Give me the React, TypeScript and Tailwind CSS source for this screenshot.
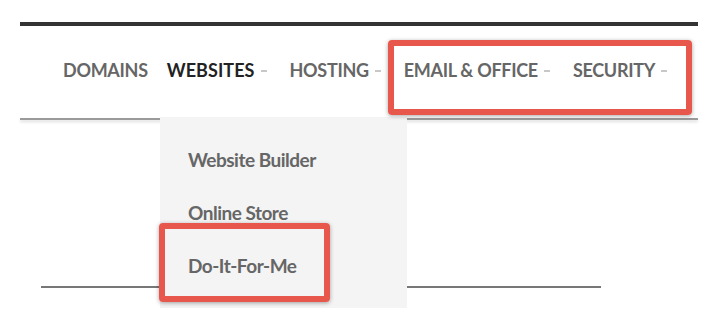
const navItems = [
  { label: 'DOMAINS', caret: false, active: false },
  { label: 'WEBSITES', caret: true, active: true },
  { label: 'HOSTING', caret: true, active: false },
  { label: 'EMAIL & OFFICE', caret: true, active: false },
  { label: 'SECURITY', caret: true, active: false },
]

const menuItems = ['Website Builder', 'Online Store', 'Do-It-For-Me']

function Caret() {
  return <span className="ml-[6px] mr-[4px] inline-block h-[2px] w-[6px] translate-y-[1px] bg-[#c8c8c8]" />
}

function Highlight({ className }: { className: string }) {
  return (
    <div
      className={`pointer-events-none absolute rounded-[4px] border-[6px] border-[#e8574c] shadow-[0_1px_4px_rgba(0,0,0,0.35)] ${className}`}
    />
  )
}

export default function App() {
  return (
    <div
      className="relative h-[331px] w-[720px] overflow-hidden bg-white"
      style={{ fontFamily: 'Lato, "Open Sans", sans-serif' }}
    >
      <div className="pt-[22px]">
        <div className="ml-[20px] mr-[22px] h-[4px] bg-[#333]" />
        <nav className="flex h-[92px] items-start gap-[19px] pl-[63px] pt-[35px]">
          {navItems.map((item) => (
            <div key={item.label} className="flex items-center">
              <span
                className={`text-[18px] font-bold leading-none ${
                  item.active ? 'tracking-[0.05px] text-[#222]' : 'tracking-[-0.3px] text-[#666]'
                }`}
              >
                {item.label}
              </span>
              {item.caret && <Caret />}
            </div>
          ))}
        </nav>
        <div className="ml-[20px] mr-[22px] h-[2px] bg-[#9a9a9a] shadow-[0_2px_3px_rgba(0,0,0,0.15)]" />
        <div className="ml-[41px] mt-[166px] h-[2px] w-[560px] bg-[#777]" />
      </div>

      <div className="absolute left-[160px] top-[117px] flex h-[191px] w-[247px] flex-col bg-[#f4f4f4] pl-[28px] pt-[32px]">
        {menuItems.map((m) => (
          <div key={m} className="h-[54px]">
            <span className="text-[19px] font-bold leading-none tracking-[-0.5px] text-[#666]">{m}</span>
          </div>
        ))}
      </div>

      <Highlight className="left-[388px] top-[40px] h-[75px] w-[304px]" />
      <Highlight className="left-[159px] top-[223px] h-[79px] w-[171px]" />
    </div>
  )
}
